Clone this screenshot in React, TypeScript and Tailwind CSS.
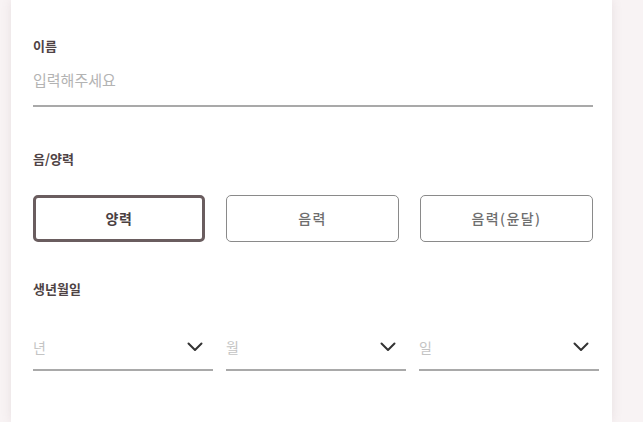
import { ReactElement } from "react";

function Chevron(): ReactElement {
  return (
    <svg width="16" height="10" viewBox="0 0 16 10" fill="none">
      <path d="M1.5 1.5L8 8L14.5 1.5" stroke="#333" strokeWidth="2" strokeLinecap="round" strokeLinejoin="round" />
    </svg>
  );
}

export default function App(): ReactElement {
  const types = ["양력", "음력", "음력(윤달)"];
  const dates = ["년", "월", "일"];
  const font = { fontFamily: '"Noto Sans CJK KR", "Noto Sans", sans-serif' };
  return (
    <div className="w-full h-screen bg-[#f8f3f4] pl-[11px] pr-[31px] overflow-hidden" style={font}>
      <div className="bg-white h-full shadow-[0_0_10px_rgba(120,90,95,0.12)] pl-[22px] pr-[13px] pt-[36px]">
        <div className="text-[13px] font-bold text-[#4f4345] leading-[20px]">이름</div>
        <div className="mr-[6px] mt-[13px] border-b-2 border-[#a9a9a9] pb-[14px] text-[15px] leading-[22px] text-[#b3b3b3]">
          입력해주세요
        </div>

        <div className="mt-[42px] text-[13px] font-bold text-[#4f4345] leading-[20px]">음/양력</div>
        <div className="mt-[26px] flex gap-[21px]">
          {types.map((t, i) => (
            <div
              key={i}
              className={
                i === 0
                  ? "w-[172px] h-[47px] flex items-center justify-center rounded-[5px] border-[3px] border-[#6a5d5f] text-[14px] font-bold text-[#4a4042] tracking-wider"
                  : "w-[173px] h-[47px] flex items-center justify-center rounded-[5px] border border-[#8a8a8a] text-[14px] font-medium text-[#6e6e6e] tracking-widest"
              }
            >
              {t}
            </div>
          ))}
        </div>

        <div className="mt-[37px] text-[13px] font-bold text-[#4f4345] leading-[20px]">생년월일</div>
        <div className="mt-[37px] flex gap-[13px]">
          {dates.map((d, i) => (
            <div key={i} className="flex-1 flex items-center justify-between border-b-2 border-[#a9a9a9] pb-[11px] pr-[10px]">
              <span className="text-[14px] leading-[22px] text-[#c4c4c4]">{d}</span>
              <Chevron />
            </div>
          ))}
        </div>
      </div>
    </div>
  );
}
